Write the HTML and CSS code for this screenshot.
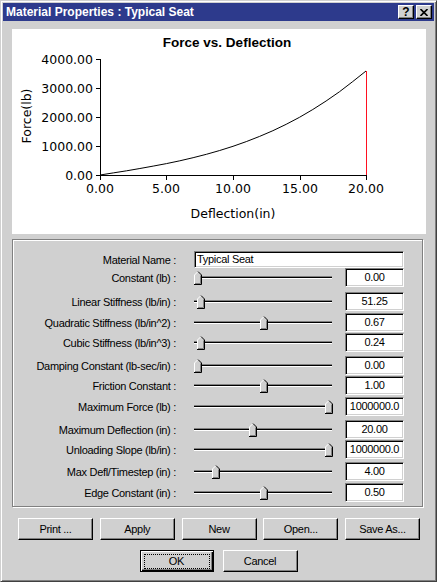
FILE: index.html
```html
<!DOCTYPE html>
<html lang="en">
<head>
    <meta charset="UTF-8">
    <title>Material Properties : Typical Seat</title>
    <link rel="stylesheet" href="styles.css">
</head>
<body>
    <div class="window">
        <div class="titlebar">
            <span class="title">Material Properties : Typical Seat</span>
            <div class="caption-btns">
                <div class="cap-btn help">?</div>
                <div class="cap-btn close">
                    <svg width="8" height="7" viewBox="0 0 8 7"><path d="M0.5 0 L7.5 7 M7.5 0 L0.5 7" stroke="#000" stroke-width="1.6"/></svg>
                </div>
            </div>
        </div>

        <!-- force / deflection plot -->
        <div class="chart">
            <svg width="414" height="205" viewBox="12 29 414 205">
                <text class="chart-title" x="227" y="47">Force vs. Deflection</text>

                <g class="axis" shape-rendering="crispEdges">
                    <line x1="100.5" y1="59" x2="100.5" y2="176"/>
                    <line x1="100" y1="175.5" x2="367" y2="175.5"/>
                    <line x1="96" y1="59.5" x2="100" y2="59.5"/>
                    <line x1="96" y1="88.5" x2="100" y2="88.5"/>
                    <line x1="96" y1="117.5" x2="100" y2="117.5"/>
                    <line x1="96" y1="146.5" x2="100" y2="146.5"/>
                    <line x1="96" y1="175.5" x2="100" y2="175.5"/>
                    <line x1="100.5" y1="175" x2="100.5" y2="180"/>
                    <line x1="166.5" y1="175" x2="166.5" y2="180"/>
                    <line x1="233.5" y1="175" x2="233.5" y2="180"/>
                    <line x1="300.5" y1="175" x2="300.5" y2="180"/>
                    <line x1="366.5" y1="175" x2="366.5" y2="180"/>
                </g>

                <g class="tick-labels y-labels">
                    <text x="93" y="64">4000.00</text>
                    <text x="93" y="93">3000.00</text>
                    <text x="93" y="122">2000.00</text>
                    <text x="93" y="151">1000.00</text>
                    <text x="93" y="180">0.00</text>
                </g>
                <g class="tick-labels x-labels">
                    <text x="100" y="193">0.00</text>
                    <text x="166" y="193">5.00</text>
                    <text x="233" y="193">10.00</text>
                    <text x="300" y="193">15.00</text>
                    <text x="366" y="193">20.00</text>
                </g>

                <text class="axis-title" x="233" y="218">Deflection(in)</text>
                <text class="axis-title" x="31" y="116" transform="rotate(-90 31 116)">Force(lb)</text>

                <polyline class="curve" points="100,175 113.3,172.9 126.6,170.8 139.9,168.5 153.2,166.1 166.5,163.6 179.8,160.8 193.1,157.7 206.4,154.3 219.7,150.5 233,146.3 246.3,141.6 259.6,136.4 272.9,130.7 286.2,124.3 299.5,117.3 312.8,109.5 326.1,101 339.4,91.8 352.7,81.6 366,71"/>
                <line class="unload" x1="366.5" y1="71" x2="366.5" y2="175" shape-rendering="crispEdges"/>
            </svg>
        </div>

        <div class="group">
            <div class="row row-name">
                <div class="label">Material Name :</div>
                <div class="name-box">Typical Seat</div>
            </div>
            <div class="row">
                <div class="label">Constant (lb) :</div>
                <div class="slider"><div class="track"></div><svg class="thumb" style="left:0px" width="8" height="14" viewBox="0 0 8 14"><path d="M0 14 V4 L4 0 L8 4 V14 Z" fill="#d0d0d0"/><path d="M0.5 13 V4 L4 0.5" stroke="#fff" fill="none"/><path d="M4 0.5 L7.5 4 V13.5 H0" stroke="#000" fill="none"/><path d="M6.5 4.5 V12.5 H1" stroke="#808080" fill="none"/></svg></div>
                <div class="value">0.00</div>
            </div>
            <div class="row">
                <div class="label">Linear Stiffness (lb/in) :</div>
                <div class="slider"><div class="track"></div><svg class="thumb" style="left:3px" width="8" height="14" viewBox="0 0 8 14"><path d="M0 14 V4 L4 0 L8 4 V14 Z" fill="#d0d0d0"/><path d="M0.5 13 V4 L4 0.5" stroke="#fff" fill="none"/><path d="M4 0.5 L7.5 4 V13.5 H0" stroke="#000" fill="none"/><path d="M6.5 4.5 V12.5 H1" stroke="#808080" fill="none"/></svg></div>
                <div class="value">51.25</div>
            </div>
            <div class="row">
                <div class="label">Quadratic Stiffness (lb/in^2) :</div>
                <div class="slider"><div class="track"></div><svg class="thumb" style="left:66px" width="8" height="14" viewBox="0 0 8 14"><path d="M0 14 V4 L4 0 L8 4 V14 Z" fill="#d0d0d0"/><path d="M0.5 13 V4 L4 0.5" stroke="#fff" fill="none"/><path d="M4 0.5 L7.5 4 V13.5 H0" stroke="#000" fill="none"/><path d="M6.5 4.5 V12.5 H1" stroke="#808080" fill="none"/></svg></div>
                <div class="value">0.67</div>
            </div>
            <div class="row">
                <div class="label">Cubic Stiffness (lb/in^3) :</div>
                <div class="slider"><div class="track"></div><svg class="thumb" style="left:3px" width="8" height="14" viewBox="0 0 8 14"><path d="M0 14 V4 L4 0 L8 4 V14 Z" fill="#d0d0d0"/><path d="M0.5 13 V4 L4 0.5" stroke="#fff" fill="none"/><path d="M4 0.5 L7.5 4 V13.5 H0" stroke="#000" fill="none"/><path d="M6.5 4.5 V12.5 H1" stroke="#808080" fill="none"/></svg></div>
                <div class="value">0.24</div>
            </div>
            <div class="row">
                <div class="label">Damping Constant (lb-sec/in) :</div>
                <div class="slider"><div class="track"></div><svg class="thumb" style="left:0px" width="8" height="14" viewBox="0 0 8 14"><path d="M0 14 V4 L4 0 L8 4 V14 Z" fill="#d0d0d0"/><path d="M0.5 13 V4 L4 0.5" stroke="#fff" fill="none"/><path d="M4 0.5 L7.5 4 V13.5 H0" stroke="#000" fill="none"/><path d="M6.5 4.5 V12.5 H1" stroke="#808080" fill="none"/></svg></div>
                <div class="value">0.00</div>
            </div>
            <div class="row">
                <div class="label">Friction Constant :</div>
                <div class="slider"><div class="track"></div><svg class="thumb" style="left:66px" width="8" height="14" viewBox="0 0 8 14"><path d="M0 14 V4 L4 0 L8 4 V14 Z" fill="#d0d0d0"/><path d="M0.5 13 V4 L4 0.5" stroke="#fff" fill="none"/><path d="M4 0.5 L7.5 4 V13.5 H0" stroke="#000" fill="none"/><path d="M6.5 4.5 V12.5 H1" stroke="#808080" fill="none"/></svg></div>
                <div class="value">1.00</div>
            </div>
            <div class="row">
                <div class="label">Maximum Force (lb) :</div>
                <div class="slider"><div class="track"></div><svg class="thumb" style="left:131px" width="8" height="14" viewBox="0 0 8 14"><path d="M0 14 V4 L4 0 L8 4 V14 Z" fill="#d0d0d0"/><path d="M0.5 13 V4 L4 0.5" stroke="#fff" fill="none"/><path d="M4 0.5 L7.5 4 V13.5 H0" stroke="#000" fill="none"/><path d="M6.5 4.5 V12.5 H1" stroke="#808080" fill="none"/></svg></div>
                <div class="value">1000000.0</div>
            </div>
            <div class="row">
                <div class="label">Maximum Deflection (in) :</div>
                <div class="slider"><div class="track"></div><svg class="thumb" style="left:55px" width="8" height="14" viewBox="0 0 8 14"><path d="M0 14 V4 L4 0 L8 4 V14 Z" fill="#d0d0d0"/><path d="M0.5 13 V4 L4 0.5" stroke="#fff" fill="none"/><path d="M4 0.5 L7.5 4 V13.5 H0" stroke="#000" fill="none"/><path d="M6.5 4.5 V12.5 H1" stroke="#808080" fill="none"/></svg></div>
                <div class="value">20.00</div>
            </div>
            <div class="row">
                <div class="label">Unloading Slope (lb/in) :</div>
                <div class="slider"><div class="track"></div><svg class="thumb" style="left:131px" width="8" height="14" viewBox="0 0 8 14"><path d="M0 14 V4 L4 0 L8 4 V14 Z" fill="#d0d0d0"/><path d="M0.5 13 V4 L4 0.5" stroke="#fff" fill="none"/><path d="M4 0.5 L7.5 4 V13.5 H0" stroke="#000" fill="none"/><path d="M6.5 4.5 V12.5 H1" stroke="#808080" fill="none"/></svg></div>
                <div class="value">1000000.0</div>
            </div>
            <div class="row">
                <div class="label">Max Defl/Timestep (in) :</div>
                <div class="slider"><div class="track"></div><svg class="thumb" style="left:18px" width="8" height="14" viewBox="0 0 8 14"><path d="M0 14 V4 L4 0 L8 4 V14 Z" fill="#d0d0d0"/><path d="M0.5 13 V4 L4 0.5" stroke="#fff" fill="none"/><path d="M4 0.5 L7.5 4 V13.5 H0" stroke="#000" fill="none"/><path d="M6.5 4.5 V12.5 H1" stroke="#808080" fill="none"/></svg></div>
                <div class="value">4.00</div>
            </div>
            <div class="row">
                <div class="label">Edge Constant (in) :</div>
                <div class="slider"><div class="track"></div><svg class="thumb" style="left:66px" width="8" height="14" viewBox="0 0 8 14"><path d="M0 14 V4 L4 0 L8 4 V14 Z" fill="#d0d0d0"/><path d="M0.5 13 V4 L4 0.5" stroke="#fff" fill="none"/><path d="M4 0.5 L7.5 4 V13.5 H0" stroke="#000" fill="none"/><path d="M6.5 4.5 V12.5 H1" stroke="#808080" fill="none"/></svg></div>
                <div class="value">0.50</div>
            </div>
        </div>

        <div class="btn-row">
            <div class="btn">Print ...</div>
            <div class="btn">Apply</div>
            <div class="btn">New</div>
            <div class="btn">Open...</div>
            <div class="btn">Save As...</div>
        </div>
        <div class="btn-row btn-row-main">
            <div class="btn btn-default"><span class="focus">OK</span></div>
            <div class="btn">Cancel</div>
        </div>
    </div>
</body>
</html>
```

FILE: styles.css
```css
body {
    margin: 0;
    background: #d0d0d0;
    font-family: "Liberation Sans", Arial, sans-serif;
    font-size: 11px;
    letter-spacing: -0.3px;
    color: #000;
}

.window {
    width: 437px;
    height: 582px;
    box-sizing: border-box;
    background: #d0d0d0;
    border: 1px solid;
    border-color: #d0d0d0 #404040 #404040 #d0d0d0;
    box-shadow: inset 1px 1px #fff, inset -1px -1px #808080;
    padding: 2px;
}

/* Title bar */
.titlebar {
    height: 18px;
    background: #2d3a8c;
    color: #fff;
    display: flex;
    align-items: center;
    justify-content: space-between;
    padding: 0 2px 0 3px;
}

.title {
    font-size: 12px;
    font-weight: bold;
    letter-spacing: 0;
}

.caption-btns {
    display: flex;
    gap: 2px;
}

.cap-btn {
    width: 16px;
    height: 14px;
    box-sizing: border-box;
    background: #d0d0d0;
    border: 1px solid;
    border-color: #fff #000 #000 #fff;
    box-shadow: inset -1px -1px #808080;
    display: flex;
    align-items: center;
    justify-content: center;
    color: #000;
}

.cap-btn.help {
    font-size: 12px;
    font-weight: bold;
    line-height: 12px;
    letter-spacing: 0;
}

/* Chart */
.chart {
    margin: 8px 8px 0 9px;
    height: 205px;
    background: #fff;
}

.chart svg {
    display: block;
}

.chart-title {
    font-family: "Liberation Sans", Arial, sans-serif;
    font-size: 13.5px;
    font-weight: bold;
    text-anchor: middle;
    letter-spacing: 0;
}

.axis line {
    stroke: #000;
    stroke-width: 1;
}

.tick-labels text,
.axis-title {
    font-family: "DejaVu Sans", sans-serif;
    font-size: 12.5px;
    letter-spacing: 0;
}

.y-labels text {
    text-anchor: end;
}

.x-labels text,
.axis-title {
    text-anchor: middle;
}

.curve {
    fill: none;
    stroke: #000;
    stroke-width: 1;
}

.unload {
    stroke: #ff1020;
    stroke-width: 1;
}

/* Properties group */
.group {
    margin: 5px 11px 0 9px;
    height: 268px;
    box-sizing: border-box;
    border: 1px solid #808080;
    box-shadow: inset 1px 1px #fff, 1px 1px #fff;
    padding: 11px 0 0 1px;
}

.row {
    display: flex;
    align-items: center;
    height: 19px;
}

.row-name {
    height: 17px;
}

.row:nth-child(3) { margin-top: 5px; }
.row:nth-child(4) { margin-top: 2px; }
.row:nth-child(5) { margin-top: 1px; }
.row:nth-child(6) { margin-top: 4px; }
.row:nth-child(7) { margin-top: 1px; }
.row:nth-child(8) { margin-top: 2px; }
.row:nth-child(9) { margin-top: 4px; }
.row:nth-child(10) { margin-top: 1px; }
.row:nth-child(11) { margin-top: 3px; }
.row:nth-child(12) { margin-top: 2px; }

.label {
    width: 162px;
    padding-right: 2px;
    text-align: right;
    white-space: nowrap;
}

.name-box {
    width: 210px;
    height: 17px;
    box-sizing: border-box;
    margin-left: 16px;
    background: #fff;
    border: 1px solid;
    border-color: #808080 #fff #fff #808080;
    box-shadow: inset 1px 1px #000, inset -1px -1px #d0d0d0;
    padding-left: 2px;
    line-height: 15px;
}

.slider {
    position: relative;
    width: 138px;
    height: 19px;
    margin-left: 16px;
    display: flex;
    align-items: center;
}

.track {
    width: 100%;
    height: 1px;
    background: #000;
    border-top: 1px solid #808080;
    border-bottom: 1px solid #fff;
}

.thumb {
    position: absolute;
    top: 3px;
}

.value {
    width: 59px;
    height: 19px;
    box-sizing: border-box;
    margin-left: 13px;
    background: #fff;
    border: 1px solid;
    border-color: #808080 #fff #fff #808080;
    box-shadow: inset 1px 1px #000, inset -1px -1px #d0d0d0;
    text-align: center;
    line-height: 17px;
    white-space: nowrap;
    overflow: hidden;
}

/* Buttons */
.btn-row {
    display: flex;
    justify-content: space-between;
    margin: 11px 14px 0 15px;
}

.btn-row-main {
    justify-content: center;
    gap: 9px;
    margin: 10px 0 0 0;
}

.btn {
    width: 75px;
    height: 22px;
    box-sizing: border-box;
    background: #d0d0d0;
    border: 1px solid;
    border-color: #fff #000 #000 #fff;
    box-shadow: inset -1px -1px #808080;
    display: flex;
    align-items: center;
    justify-content: center;
}

.btn-default {
    width: 74px;
    border: 1px solid #000;
    box-shadow: inset 1px 1px #fff, inset -1px -1px #000, inset -2px -2px #808080;
}

.focus {
    width: 66px;
    height: 15px;
    box-sizing: border-box;
    border: 1px dotted #000;
    display: flex;
    align-items: center;
    justify-content: center;
}
```
